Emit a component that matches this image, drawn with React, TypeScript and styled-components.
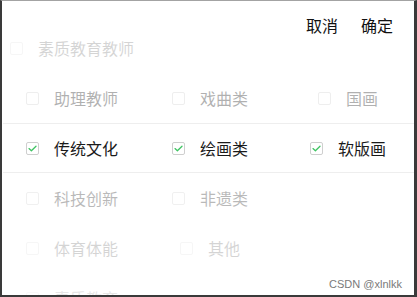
import React from "react";
import styled, { createGlobalStyle } from "styled-components";

const GlobalStyle = createGlobalStyle`
  html, body {
    margin: 0;
    padding: 0;
    width: 417px;
    height: 297px;
    overflow: hidden;
    background: #ffffff;
  }
  * {
    box-sizing: border-box;
  }
`;

const Frame = styled.div`
  position: relative;
  width: 417px;
  height: 297px;
  overflow: hidden;
  background: #ffffff;
  border-top: 1px solid #a3a3a3;
  border-left: 2px solid #3a3a3a;
  border-right: 3px solid #3a3a3a;
  border-bottom: 2px solid #3a3a3a;
  font-family: "Noto Sans CJK SC", "Noto Sans", sans-serif;
`;

const Toolbar = styled.div`
  position: absolute;
  top: 0;
  right: 0;
  height: 47px;
  display: flex;
  align-items: center;
  gap: 23px;
  padding-right: 21px;
  z-index: 2;
`;

const ToolButton = styled.span`
  font-size: 16px;
  color: #111111;
  line-height: 1;
`;

const Wheel = styled.div`
  display: flex;
  flex-direction: column;
  padding: 22px 0 0 1px;
`;

const Row = styled.div<{ $fade: number; $selected?: boolean }>`
  display: grid;
  grid-template-columns: repeat(3, 138px);
  height: 50px;
  flex-shrink: 0;
  border-top: 1px solid ${(p) => (p.$selected ? "#eeeeee" : "transparent")};
  border-bottom: 1px solid ${(p) => (p.$selected ? "#eeeeee" : "transparent")};
  opacity: ${(p) => p.$fade};
`;

const Cell = styled.div`
  display: flex;
  align-items: center;
  justify-content: center;
  gap: 15px;
`;

const Box = styled.span<{ $checked?: boolean }>`
  width: 13px;
  height: 13px;
  border: 1px solid #cfcfcf;
  border-radius: 2px;
  display: flex;
  align-items: center;
  justify-content: center;
  flex-shrink: 0;
  background: #ffffff;
`;

const Label = styled.span`
  font-size: 16px;
  color: #1a1a1a;
  line-height: 1;
  white-space: nowrap;
`;

const Watermark = styled.span`
  position: absolute;
  right: 12px;
  bottom: 5px;
  font-family: "Liberation Sans", Arial, sans-serif;
  font-size: 11px;
  color: #7a7a7a;
`;

type Item = { label: string; checked?: boolean } | null;

const rows: { fade: number; selected?: boolean; items: Item[] }[] = [
  { fade: 0.18, items: [{ label: "素质教育教师" }, null, null] },
  { fade: 0.34, items: [{ label: "助理教师" }, { label: "戏曲类" }, { label: "国画" }] },
  {
    fade: 1,
    selected: true,
    items: [
      { label: "传统文化", checked: true },
      { label: "绘画类", checked: true },
      { label: "软版画", checked: true },
    ],
  },
  { fade: 0.3, items: [{ label: "科技创新" }, { label: "非遗类" }, null] },
  { fade: 0.18, items: [{ label: "体育体能" }, { label: "其他" }, null] },
  { fade: 0.1, items: [{ label: "素质教育" }, null, null] },
];

function Check() {
  return (
    <svg width="9" height="7" viewBox="0 0 9 7">
      <path
        d="M1 3.6 L3.4 5.8 L8 1.2"
        fill="none"
        stroke="#3fc463"
        strokeWidth="1.3"
        strokeLinecap="round"
        strokeLinejoin="round"
      />
    </svg>
  );
}

export default function App() {
  return (
    <>
      <GlobalStyle />
      <Frame>
        <Toolbar>
          <ToolButton>取消</ToolButton>
          <ToolButton>确定</ToolButton>
        </Toolbar>
        <Wheel>
          {rows.map((row, i) => (
            <Row key={i} $fade={row.fade} $selected={row.selected}>
              {row.items.map((item, j) => (
                <Cell key={j}>
                  {item && (
                    <>
                      <Box $checked={item.checked}>{item.checked && <Check />}</Box>
                      <Label>{item.label}</Label>
                    </>
                  )}
                </Cell>
              ))}
            </Row>
          ))}
        </Wheel>
        <Watermark>CSDN @xlnlkk</Watermark>
      </Frame>
    </>
  );
}
